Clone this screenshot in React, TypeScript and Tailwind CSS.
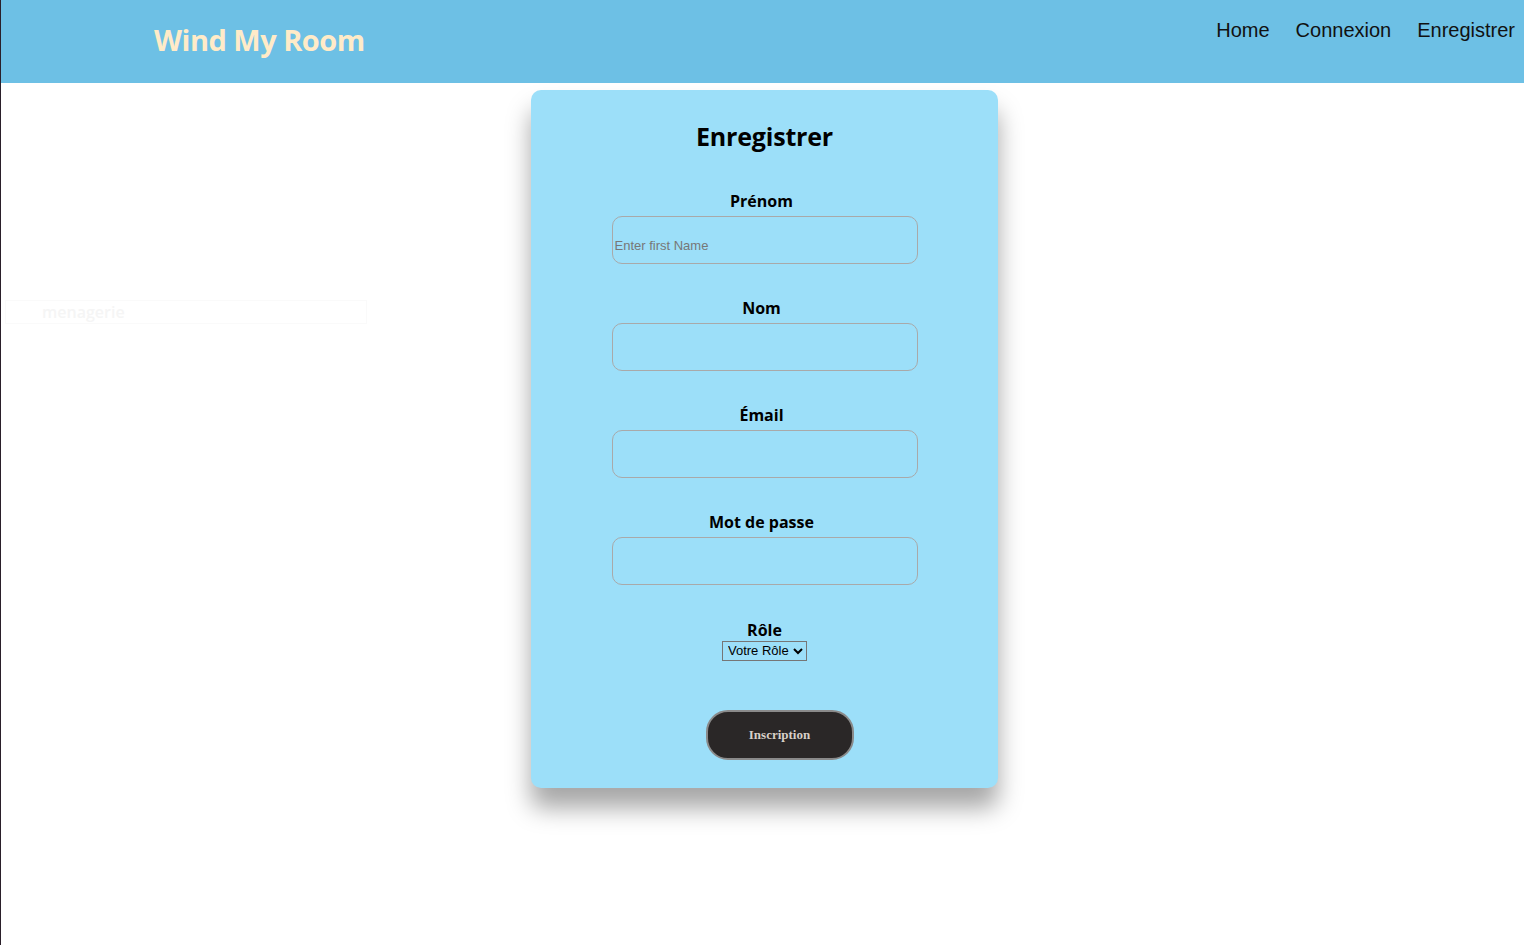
export default function App() {
  const fields = [
    { label: "Prénom", placeholder: "Enter first Name", type: "text" },
    { label: "Nom", placeholder: "", type: "text" },
    { label: "Émail", placeholder: "", type: "email" },
    { label: "Mot de passe", placeholder: "", type: "password" },
  ];
  return (
    <div className="min-h-[945px] bg-white border-l border-[#2a1f2a] font-['Liberation_Sans',Arial,sans-serif]">
      <header className="h-[83px] bg-[#6dc0e5] flex items-start justify-between">
        <div className="pl-[153px] pt-[18px] text-[29px] font-bold text-[#ffebc8] font-['Open_Sans',sans-serif] tracking-[-0.5px]">
          Wind My Room
        </div>
        <nav className="flex gap-[26px] pt-[15px] pr-[9px] text-[20px] text-[#111]">
          <a href="#">Home</a>
          <a href="#">Connexion</a>
          <a href="#">Enregistrer</a>
        </nav>
      </header>

      <div className="relative">
        <div className="absolute left-[4px] top-[217px] w-[362px] h-[24px] border border-[#fafafa] text-[#f5f5f5] text-[16px] pl-[36px] leading-[22px] font-semibold font-['Open_Sans',sans-serif]">
          menagerie
        </div>
        <div className="flex justify-center pt-[7px] pl-[4px]">
          <form className="w-[467px] h-[698px] bg-[#9cdff9] rounded-[10px] shadow-[0_20px_25px_rgba(0,0,0,0.35)] flex flex-col items-center font-['Open_Sans',sans-serif]">
            <h1 className="mt-[28px] text-[25px] font-bold text-black tracking-[-0.2px]">Enregistrer</h1>
            <div className="mt-[33px] flex flex-col items-center gap-[32px]">
              {fields.map((f) => (
                <div key={f.label} className="flex flex-col items-center">
                  <label className="text-[16px] font-bold text-black leading-[24px] mr-[6px]">{f.label}</label>
                  <input
                    type={f.type}
                    placeholder={f.placeholder}
                    className="mt-[3px] w-[306px] h-[48px] rounded-[10px] border border-[#a9a9a9] bg-transparent pt-[12px] px-[2px] text-[13px] font-['Liberation_Sans',Arial,sans-serif] placeholder:text-[#777] outline-none"
                  />
                </div>
              ))}
              <div className="flex flex-col items-center mt-[2px]">
                <label className="text-[16px] font-bold text-black leading-[22px]">Rôle</label>
                <select className="h-[20px] border border-[#767676] bg-[#9cdff9] text-[13px] text-black font-['Liberation_Sans',Arial,sans-serif] px-[1px]">
                  <option>Votre Rôle</option>
                </select>
              </div>
            </div>
            <button
              type="button"
              className="mt-[49px] ml-[30px] w-[148px] h-[50px] rounded-[22px] border-2 border-[#8a8a8a] bg-[#2a2727] text-[#d8d0c8] text-[13px] font-bold font-['Liberation_Serif',serif]"
            >
              Inscription
            </button>
          </form>
        </div>
      </div>
    </div>
  );
}
